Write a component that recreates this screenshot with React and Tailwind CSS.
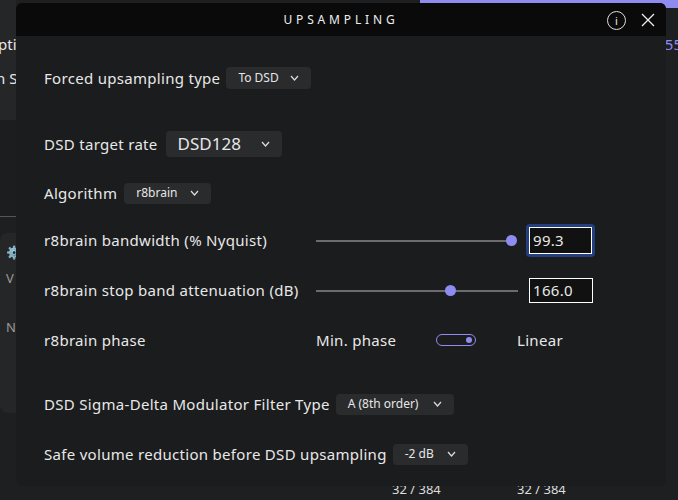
import React from "react";

const Chevron = () => (
  <svg width="9" height="6" viewBox="0 0 9 6" className="ml-auto">
    <path d="M1 1l3.5 4L8 1" fill="none" stroke="#ddd" strokeWidth="1.2" />
  </svg>
);

const Select = ({ label, className = "" }) => (
  <div className={`flex items-center rounded bg-[#2a2b2d] px-3 tracking-normal text-[#e6e6e6] ${className}`}>
    <span>{label}</span>
    <Chevron />
  </div>
);

const Slider = ({ width, pos }) => (
  <div className="relative h-3 flex items-center" style={{ width }}>
    <div className="h-[2px] w-full bg-[#6b6b6b]" />
    <div className="absolute h-[11px] w-[11px] rounded-full bg-[#8e8cf0]" style={{ left: pos - 5 }} />
  </div>
);

export default function App() {
  return (
    <div className="relative h-[500px] w-[678px] overflow-hidden bg-[#1e1f21] font-['Inter',sans-serif] text-[14px] text-[#e8e8e8]">
      {/* backdrop page */}
      <div className="flex h-full w-full">
        <div className="flex w-[16px] flex-col">
          <div className="h-[120px] bg-[#252628] pt-[33px] text-[15px] leading-[22px] whitespace-nowrap">
            <div className="-ml-[2px]">pti</div>
            <div className="mt-[12px] -ml-[4px]">n S</div>
          </div>
          <div className="h-[96px] bg-[#1c1d1f]" />
          <div className="h-px bg-[#555]" />
          <div className="mt-[16px] h-[180px] rounded-l-lg bg-[#252628] pl-[6px] pt-[10px] text-[#999] text-[13px]">
            <div className="text-white">⚙</div>
            <div className="mt-[6px]">V</div>
            <div className="mt-[30px]">N</div>
          </div>
        </div>
        <div className="flex-1" />
      </div>
      <div className="absolute right-0 top-0 h-[8px] w-[258px] rounded-bl bg-[#8e8cf0]" />
      <div className="absolute right-[-4px] top-[33px] text-[15px] text-[#8e8cf0]">55</div>
      <div className="absolute left-[392px] top-[480px] text-[13px] text-[#ddd]">32 / 384</div>
      <div className="absolute left-[517px] top-[480px] text-[13px] text-[#ddd]">32 / 384</div>

      {/* modal */}
      <div className="absolute left-[16px] top-[3px] flex h-[483px] w-[650px] flex-col overflow-hidden rounded-md bg-[#1b1c1d]">
        <div className="relative flex h-[33px] items-center justify-center bg-[#0a0a0a]">
          <span className="text-[12px] tracking-[0.32em] text-[#eee]">UPSAMPLING</span>
          <div className="absolute right-[40px] top-[8px] flex h-[19px] w-[19px] items-center justify-center rounded-full border border-[#ddd] text-[11px] leading-none">i</div>
          <svg className="absolute right-[11px] top-[10px]" width="14" height="14" viewBox="0 0 14 14">
            <path d="M1 1l12 12M13 1L1 13" stroke="#eee" strokeWidth="1.3" />
          </svg>
        </div>
        <div className="flex flex-col pl-[28px] text-[15px] tracking-[0.02em]">
          <div className="mt-[31px] flex h-[22px] items-center gap-[6px]">
            <span>Forced upsampling type</span>
            <Select label="To DSD" className="h-[22px] w-[85px] text-[12px]" />
          </div>
          <div className="mt-[42px] flex h-[26px] items-center gap-[8px]">
            <span>DSD target rate</span>
            <Select label="DSD128" className="h-[26px] w-[116px] text-[17px]" />
          </div>
          <div className="mt-[25px] flex h-[22px] items-center gap-[7px]">
            <span>Algorithm</span>
            <Select label="r8brain" className="h-[21px] w-[87px] text-[12px]" />
          </div>
          <div className="mt-[20px] flex h-[33px] items-center">
            <span className="w-[272px]">r8brain bandwidth (% Nyquist)</span>
            <Slider width={196} pos={195} />
            <div className="ml-[14px] flex h-[33px] w-[69px] items-center rounded border-[3px] border-[#243f80] bg-[#111]">
              <div className="flex h-full w-full items-center border border-white pl-[3px]">99.3</div>
            </div>
          </div>
          <div className="mt-[21px] flex h-[25px] items-center">
            <span className="w-[272px]">r8brain stop band attenuation (dB)</span>
            <Slider width={202} pos={134} />
            <div className="ml-[11px] flex h-[25px] w-[64px] items-center border border-white bg-[#111] pl-[3px]">166.0</div>
          </div>
          <div className="mt-[25px] flex h-[24px] items-center">
            <span className="w-[272px]">r8brain phase</span>
            <span className="w-[120px]">Min. phase</span>
            <div className="flex h-[12px] w-[40px] items-center justify-end rounded-full border border-[#8e8cf0] pr-[3px]">
              <div className="h-[6px] w-[6px] rounded-full bg-[#8e8cf0]" />
            </div>
            <span className="ml-[41px]">Linear</span>
          </div>
          <div className="mt-[41px] flex h-[22px] items-center gap-[6px]">
            <span>DSD Sigma-Delta Modulator Filter Type</span>
            <Select label="A (8th order)" className="h-[21px] w-[118px] text-[12px]" />
          </div>
          <div className="mt-[28px] flex h-[22px] items-center gap-[6px]">
            <span>Safe volume reduction before DSD upsampling</span>
            <Select label="-2 dB" className="h-[21px] w-[75px] text-[12px]" />
          </div>
        </div>
      </div>
    </div>
  );
}
